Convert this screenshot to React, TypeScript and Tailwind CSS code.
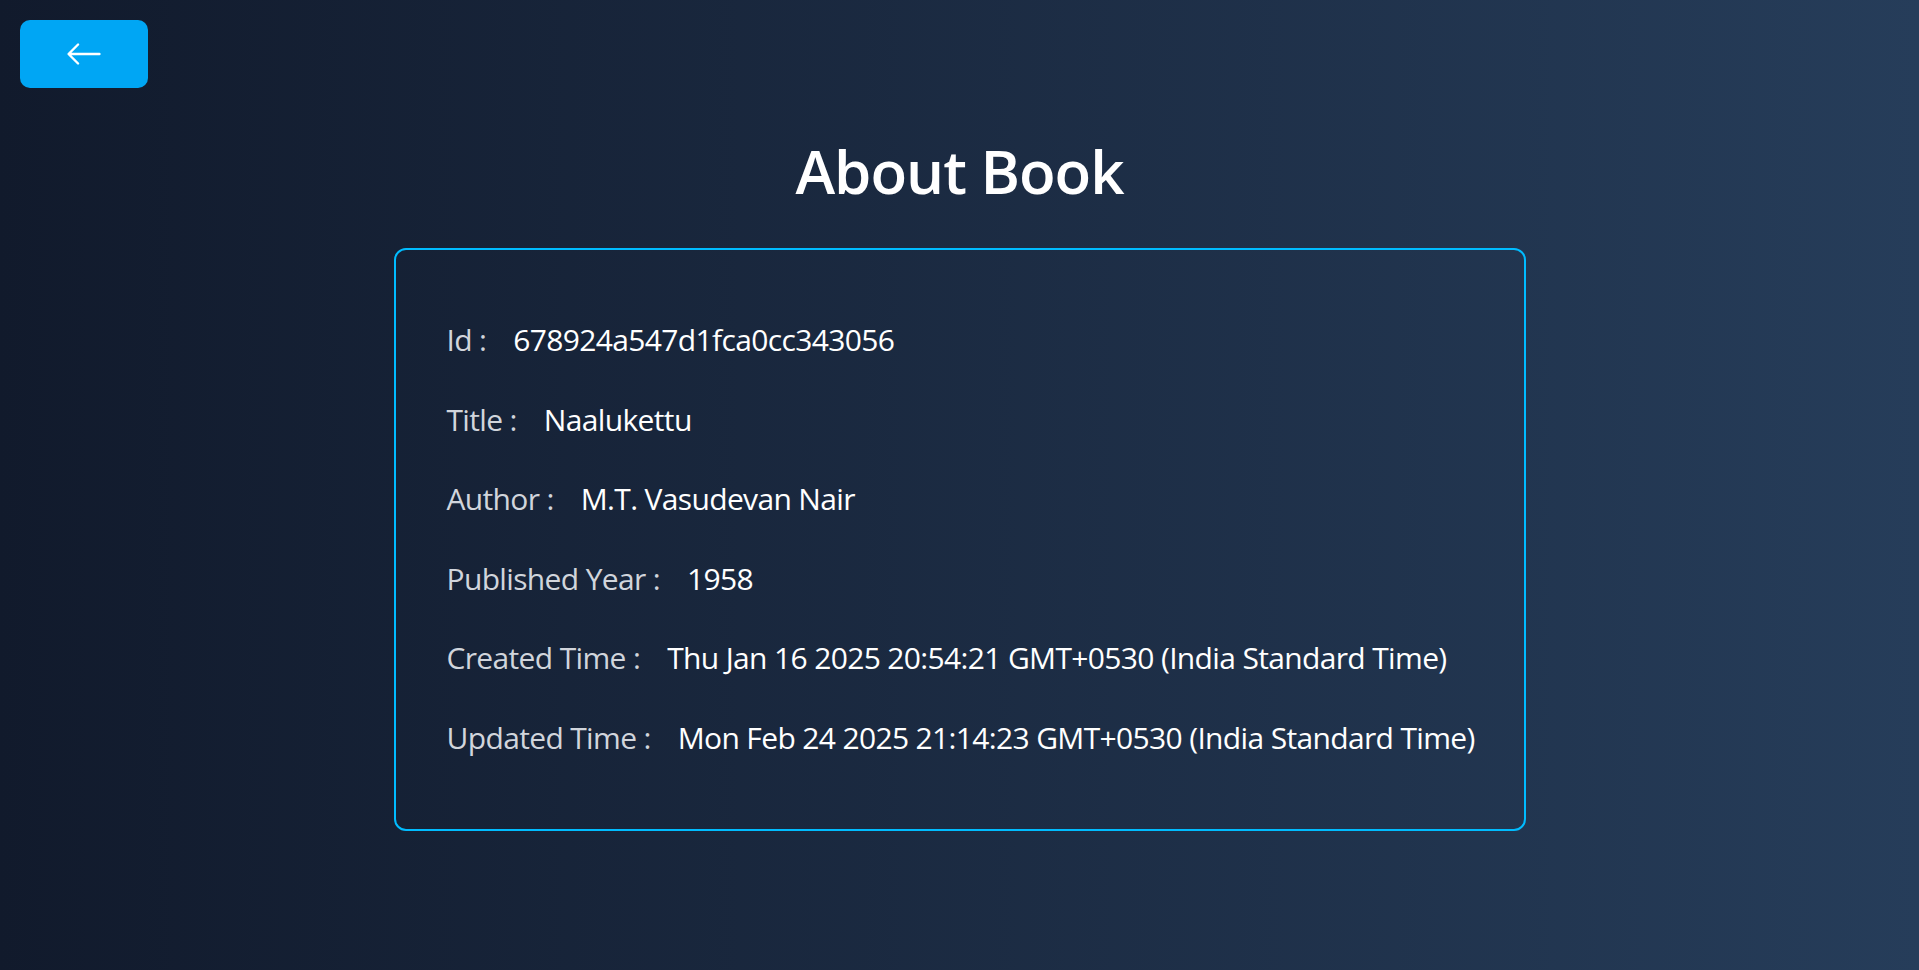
import { BsArrowLeft } from "react-icons/bs";

const book = [
  { label: "Id", value: "678924a547d1fca0cc343056" },
  { label: "Title", value: "Naalukettu" },
  { label: "Author", value: "M.T. Vasudevan Nair" },
  { label: "Published Year", value: "1958" },
  { label: "Created Time", value: "Thu Jan 16 2025 20:54:21 GMT+0530 (India Standard Time)" },
  { label: "Updated Time", value: "Mon Feb 24 2025 21:14:23 GMT+0530 (India Standard Time)" },
];

export default function App() {
  return (
    <div className="min-h-screen w-full bg-gradient-to-r from-[#111a2c] to-[#263d5a] px-5 pt-5 font-['Open_Sans',sans-serif] text-white">
      <button className="flex h-[68px] w-[128px] items-center justify-center rounded-[10px] bg-sky-500 text-white">
        <BsArrowLeft size={38} />
      </button>

      <h1 className="mt-[53px] text-center text-[60px] leading-[60px] font-semibold tracking-[-1px]">
        About Book
      </h1>

      <div className="mx-auto mt-[47px] flex w-[1132px] flex-col gap-[39.6px] rounded-xl border-2 border-sky-400 pt-[70px] pr-[40px] pb-[71px] pl-[51px]">
        {book.map((row) => (
          <div key={row.label} className="text-[30px] leading-[40px] tracking-[-0.65px] whitespace-nowrap">
            <span className="mr-[27px] text-gray-300">{row.label} :</span>
            <span>{row.value}</span>
          </div>
        ))}
      </div>
    </div>
  );
}
